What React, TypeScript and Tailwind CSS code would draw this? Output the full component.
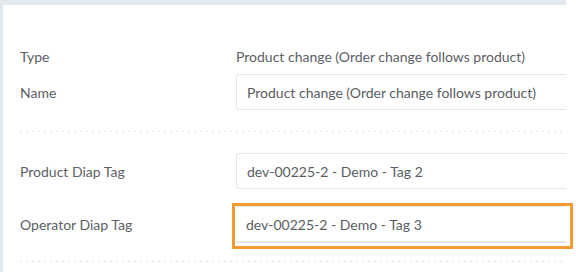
import React from "react";

const font = { fontFamily: "Lato, 'Open Sans', sans-serif" };

function Field({ value }: { value: string }) {
  return (
    <div className="flex h-[36px] w-[330px] items-center rounded-l-[3px] border border-r-0 border-[#e3e7ec] pl-[10px] text-[14px] text-[#585d63]">
      {value}
    </div>
  );
}

function Dots({ className }: { className: string }) {
  return (
    <div
      className={`h-px bg-[linear-gradient(to_right,#dce0e5_2px,transparent_2px)] bg-[length:6px_1px] ${className}`}
    />
  );
}

export default function App() {
  return (
    <div className="h-[272px] w-[576px] bg-white" style={font}>
      <div className="h-full w-[566px] bg-[#e4e9ef] pl-[3px] pt-[5px]">
        <div className="h-full w-[563px] rounded-tl-[3px] bg-white pl-[17px] pt-[34px]">
          {/* Type */}
          <div className="flex h-[35px] items-center text-[14px] text-[#5b6066]">
            <div className="w-[216px]">Type</div>
            <div>Product change (Order change follows product)</div>
          </div>

          {/* Name */}
          <div className="flex h-[36px] items-center text-[14px] text-[#5b6066]">
            <div className="w-[216px]">Name</div>
            <Field value="Product change (Order change follows product)" />
          </div>

          <Dots className="mt-[21px]" />

          {/* Product Diap Tag */}
          <div className="mt-[21px] flex h-[36px] items-center text-[14px] text-[#5b6066]">
            <div className="w-[216px]">Product Diap Tag</div>
            <Field value="dev-00225-2 - Demo - Tag 2" />
          </div>

          {/* Operator Diap Tag */}
          <div className="mt-[17px] flex h-[37px] items-center text-[14px] text-[#5b6066]">
            <div className="w-[216px]">Operator Diap Tag</div>
            <div className="relative">
              <div className="flex h-[37px] w-[330px] items-center border-b-2 border-t border-[#e6e6e6] pl-[10px] text-[14px] text-[#585d63]">
                dev-00225-2 - Demo - Tag 3
              </div>
              <div className="pointer-events-none absolute -bottom-[6px] -left-[4px] -right-[7px] -top-[3px] border-[3px] border-[#f39a32]" />
            </div>
          </div>

          <Dots className="mt-[18px]" />
        </div>
      </div>
    </div>
  );
}
